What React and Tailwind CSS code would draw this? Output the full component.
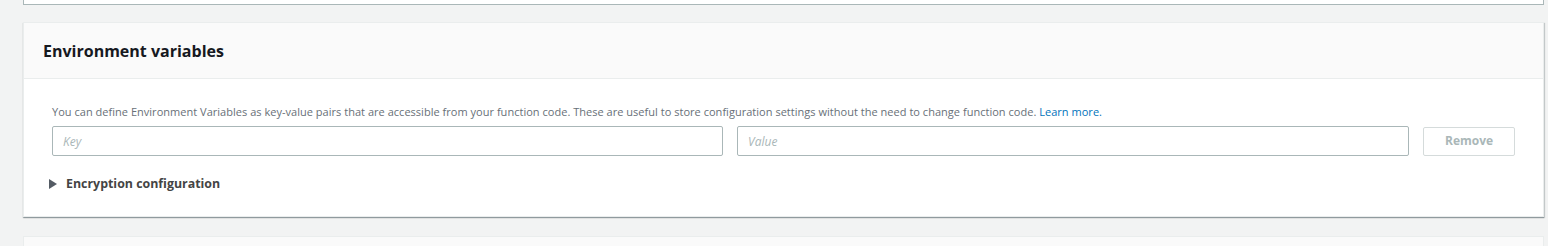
export default function App() {
  const font = { fontFamily: '"Open Sans", "Liberation Sans", sans-serif' };
  return (
    <div className="w-[1548px] h-[246px] overflow-hidden bg-[#f2f3f3] pl-[23px] pr-[4px]" style={font}>
      <div className="h-[6px] -mt-[1px] bg-white border-x border-b border-[#aab7b8] mb-[17px]" />
      <div className="bg-white border border-[#eaeded] shadow-[0_1px_1px_0_rgba(0,28,36,0.3),1px_1px_1px_0_rgba(0,28,36,0.15)]">
        <div className="h-[56px] bg-[#fafafa] border-b border-[#eaeded] flex items-center px-[19px]">
          <h2 className="text-[16px] font-bold text-[#16191f] leading-none">Environment variables</h2>
        </div>
        <div className="px-[28px] pt-[25px] pb-[22px]">
          <p className="text-[11px] tracking-[0.025px] text-[#687078] leading-[16px]">
            You can define Environment Variables as key-value pairs that are accessible from your function code. These are useful to store configuration settings without the need to change function code.{" "}
            <a className="text-[#0073bb]">Learn more.</a>
          </p>
          <div className="flex items-center mt-[6px]">
            <input
              placeholder="Key"
              className="w-[672px] h-[30px] border border-[#aab7b8] rounded-[2px] px-[10px] text-[12px] italic placeholder:text-[#aab7b8] outline-none"
            />
            <input
              placeholder="Value"
              className="ml-[14px] w-[673px] h-[30px] border border-[#aab7b8] rounded-[2px] px-[10px] text-[12px] italic placeholder:text-[#aab7b8] outline-none"
            />
            <button className="ml-[14px] w-[92px] h-[29px] border border-[#d5dbdb] rounded-[2px] text-[12px] font-bold text-[#aab7b8] bg-white">
              Remove
            </button>
          </div>
          <div className="flex items-center mt-[19px] -ml-[3px]">
            <svg width="8" height="10" viewBox="0 0 8 10" className="mr-[9px]">
              <path d="M0 0 L8 5 L0 10 Z" fill="#545b64" />
            </svg>
            <span className="text-[12.4px] font-bold text-[#444]">Encryption configuration</span>
          </div>
        </div>
      </div>
      <div className="mt-[19px] h-[20px] bg-[#fafafa] border border-[#eaeded]" />
    </div>
  );
}
